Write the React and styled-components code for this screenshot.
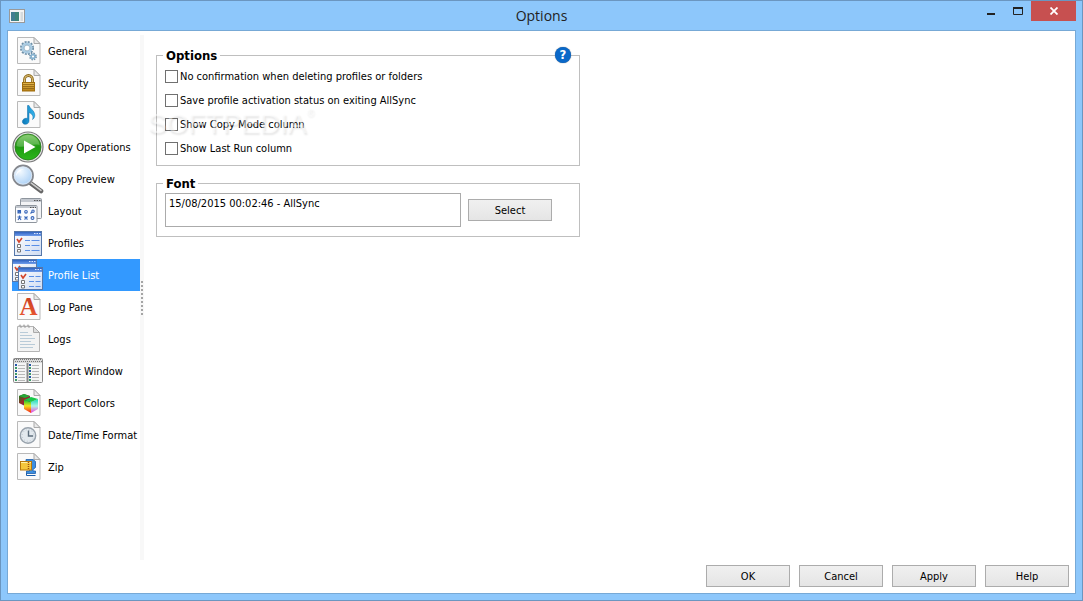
import { useState } from 'react';
import styled, { createGlobalStyle } from 'styled-components';

const GlobalStyle = createGlobalStyle`
  * {
    box-sizing: border-box;
  }
  body {
    margin: 0;
    background: #8dc7fb;
    color: #000;
    font-family: 'DejaVu Sans Condensed', 'DejaVu Sans', sans-serif;
    font-size: 11px;
    line-height: 16px;
  }
  button,
  input {
    font: inherit;
    color: inherit;
  }
`;

const Window = styled.div`
  display: flex;
  flex-direction: column;
  min-height: 100vh;
  padding: 0 6px 6px;
  border: 1px solid #6b96c0;
  background: #8dc7fb;
`;

const TitleBar = styled.header`
  display: grid;
  grid-template-columns: 1fr auto 1fr;
  align-items: center;
  height: 29px;
`;

const Title = styled.h1`
  margin: 0;
  font-family: 'Open Sans', 'Noto Sans', sans-serif;
  font-size: 14px;
  font-weight: 400;
  line-height: 28px;
  color: #222;
`;

const AppIcon = styled.svg`
  display: block;
  margin-left: 2px;
`;

const Controls = styled.div`
  display: flex;
  align-self: start;
  justify-content: flex-end;
`;

const ControlButton = styled.button`
  display: flex;
  width: ${props => (props.$close ? 45 : 27)}px;
  height: 20px;
  padding: 0;
  border: 0;
  align-items: center;
  justify-content: center;
  background: ${props => (props.$close ? '#c75050' : 'transparent')};
`;

const Client = styled.main`
  display: flex;
  flex: 1;
  flex-direction: column;
  border: 1px solid #77a9d6;
  background: #fff;
`;

const Body = styled.div`
  display: flex;
  flex: 1;
  padding: 4px 4px 0;
`;

const Sidebar = styled.nav`
  width: 128px;
  flex-shrink: 0;
`;

const Splitter = styled.div`
  display: flex;
  width: 4px;
  flex-shrink: 0;
  align-items: center;
  justify-content: center;
  background: #f8f8f8;
`;

const Grip = styled.div`
  width: 2px;
  height: 34px;
  background: repeating-linear-gradient(#a5a5a5 0 2px, transparent 2px 4px);
`;

const NavItem = styled.a`
  display: flex;
  height: 32px;
  align-items: center;
  gap: 4px;
  color: ${props => (props.$active ? '#fff' : '#000')};
  background: ${props => (props.$active ? '#3399ff' : 'transparent')};
  text-decoration: none;
  white-space: nowrap;
`;

const NavIcon = styled.svg`
  width: 32px;
  height: 32px;
  flex-shrink: 0;
`;

const Label = styled.span`
  padding-top: 2px;
`;

const Content = styled.section`
  display: flex;
  flex: 1;
  flex-direction: column;
  gap: 10px;
  padding: 13px 12px 0;
`;

const GroupWrap = styled.div`
  position: relative;
  width: 100%;
  max-width: 424px;
`;

const Group = styled.fieldset`
  min-width: 0;
  margin: 0;
  padding: ${props => props.$padding};
  border: 1px solid #bfbfbf;
`;

const Legend = styled.legend`
  margin-left: -2px;
  padding: 0 3px;
  font-size: 13px;
  font-weight: 700;
  line-height: 15px;
`;

const HelpButton = styled.button`
  position: absolute;
  top: -1px;
  right: 9px;
  width: 16px;
  height: 16px;
  padding: 0;
  border: 0;
  border-radius: 50%;
  background: #0a68c8;
  box-shadow: 0 0 1px #456;
  color: #fff;
  font-size: 13px;
  font-weight: 700;
`;

const Watermark = styled.span`
  position: absolute;
  top: 60px;
  left: -8px;
  display: flex;
  align-items: flex-start;
  font-family: 'Liberation Sans', sans-serif;
  font-size: 28px;
  line-height: 32px;
  color: rgba(255, 255, 255, 0.45);
  text-shadow: 1px 2px 2px rgba(0, 0, 0, 0.1);
  pointer-events: none;
`;

const Registered = styled.sup`
  font-size: 10px;
  line-height: 10px;
`;

const CheckRow = styled.label`
  display: flex;
  height: 24px;
  align-items: center;
  gap: 2px;
`;

const CheckBox = styled.input`
  appearance: none;
  width: 13px;
  height: 13px;
  margin: 0;
  border: 1px solid #707070;
  background: #fff;

  &:checked {
    background: #707070;
    box-shadow: inset 0 0 0 2px #fff;
  }
`;

const FontRow = styled.div`
  display: flex;
  align-items: center;
  gap: 7px;
`;

const FontPreview = styled.input`
  width: 296px;
  min-width: 0;
  height: 34px;
  padding: 0 3px 14px;
  border: 1px solid #ababab;
  background: #fff;
`;

const Button = styled.button`
  width: 84px;
  height: 22px;
  padding: 2px 0 0;
  border: 1px solid #acacac;
  background: linear-gradient(#f0f0f0, #e5e5e5);
`;

const Footer = styled.footer`
  display: flex;
  justify-content: flex-end;
  gap: 9px;
  padding: 5px 6px 6px;
`;

const Page = () => (
  <>
    <path d="M5.500 2.500h16.500l6 6v20h-22.500z" fill="#fafafa" stroke="#b9b9b9" />
    <path d="M22 2.500v6h6z" fill="#e9e9e9" stroke="#aaa" />
  </>
);

const MiniWindow = ({ x, y, w = 25, h = 23 }) => (
  <g transform={`translate(${x} ${y})`}>
    <rect x=".5" y=".5" width={w - 1} height={h - 1} fill="url(#panel)" stroke="#5577aa" />
    <rect x="1" y="1" width={w - 2} height="4" fill="url(#bar)" />
    <path d={`M${w - 8} 2.500h1.500m1 0h1.500m1 0h1.500`} stroke="#d8e6ff" />
    <path
      d={`M11 9.500h5m1.500 0h${w - 20}M11 14.500h5m1.500 0h${w - 20}M11 19.500h5m1.500 0h${w - 20}`}
      stroke="#5a8fe6"
    />
    <path d="M3.500 13.500h3v3h-3zM3.500 18.500h3v2.500h-3z" fill="#fff" stroke="#777" />
    <path d="M3 8l2 3 3-4" fill="none" stroke="#d3452c" strokeWidth="1.600" />
  </g>
);

const Defs = () => (
  <svg width="0" height="0" style={{ position: 'absolute' }} aria-hidden="true">
    <defs>
      <linearGradient id="panel" x2="1" y2="1">
        <stop stopColor="#fff" />
        <stop offset="1" stopColor="#cfdcf2" />
      </linearGradient>
      <linearGradient id="bar" x2="0" y2="1">
        <stop stopColor="#2f62c0" />
        <stop offset="1" stopColor="#6f9cec" />
      </linearGradient>
      <linearGradient id="green" x2="0" y2="1">
        <stop stopColor="#6abf4e" />
        <stop offset=".5" stopColor="#1f9a12" />
        <stop offset="1" stopColor="#2cb81c" />
      </linearGradient>
      <linearGradient id="gold" x2="0" y2="1">
        <stop stopColor="#e5b84c" />
        <stop offset="1" stopColor="#b47d12" />
      </linearGradient>
      <linearGradient id="note" x2="1" y2="0">
        <stop stopColor="#0b78b8" />
        <stop offset="1" stopColor="#35b6ee" />
      </linearGradient>
      <radialGradient id="lens" cx=".35" cy=".3" r=".8">
        <stop stopColor="#f4faff" />
        <stop offset="1" stopColor="#a3ccf5" />
      </radialGradient>
      <linearGradient id="letter" x2="0" y2="1">
        <stop stopColor="#c33a1c" />
        <stop offset="1" stopColor="#ee5a35" />
      </linearGradient>
      <linearGradient id="cubeL" x2="0" y2="1">
        <stop stopColor="#0ac832" />
        <stop offset=".45" stopColor="#f2e21c" />
        <stop offset="1" stopColor="#f81818" />
      </linearGradient>
      <linearGradient id="cubeR" x2="0" y2="1">
        <stop stopColor="#10d8b8" />
        <stop offset=".5" stopColor="#aef4e8" />
        <stop offset="1" stopColor="#f040d8" />
      </linearGradient>
      <linearGradient id="cubeB" x2="1" y2="1">
        <stop stopColor="#108018" />
        <stop offset=".5" stopColor="#a02828" />
        <stop offset="1" stopColor="#3018a0" />
      </linearGradient>
    </defs>
  </svg>
);

const icons = {
  general: (
    <>
      <Page />
      <circle cx="15" cy="13" r="6" fill="none" stroke="#6d8ea6" strokeWidth="2" strokeDasharray="2 1.140" />
      <circle cx="15" cy="13" r="4.300" fill="#fff" stroke="#a9cbe2" strokeWidth="2.400" />
      <circle cx="15" cy="13" r="2.900" fill="#fff" stroke="#7c9db5" strokeWidth=".7" />
      <circle cx="21" cy="21.500" r="3" fill="none" stroke="#6d8ea6" strokeWidth="1.800" strokeDasharray="1.400 .95" />
      <circle cx="21" cy="21.500" r="1.900" fill="#fff" stroke="#86b2d0" strokeWidth="1.600" />
    </>
  ),
  security: (
    <>
      <Page />
      <path d="M12.500 16v-3.500a4 4 0 0 1 8 0V16" fill="none" stroke="#8d6a1c" strokeWidth="2.800" />
      <path d="M12.500 16v-3.500a4 4 0 0 1 8 0V16" fill="none" stroke="#e3c57c" />
      <rect x="10.500" y="15.500" width="12" height="8.500" fill="url(#gold)" stroke="#a06d0c" />
      <path d="M11 17.500h11M11 19.500h11M11 21.500h11" stroke="#8e6212" strokeWidth=".8" />
    </>
  ),
  sounds: (
    <>
      <Page />
      <path
        d="M15.500 6.500h1.500c.5 3 5.800 5 5.800 9.500 0 2-.8 3.500-2.300 4.500 1-2.500.8-5-3.500-7v8.500c0 2.200-2 3.700-4.500 3.200-3-.7-2.700-4.700.3-5.700 1-.4 2-.3 2.700 0z"
        fill="url(#note)"
        stroke="#0a6ba8"
        strokeWidth=".5"
      />
    </>
  ),
  copy: (
    <>
      <circle cx="16" cy="16" r="15" fill="#e7e7e7" stroke="#777" strokeWidth="1.200" />
      <circle cx="16" cy="16" r="13" fill="url(#green)" stroke="#25751a" strokeWidth=".8" />
      <path d="M4.500 15C5 8.500 10 4 16 4s11 4.500 11.500 10C20 12 12 18 4.500 15z" fill="#fff" opacity=".22" />
      <path d="M12 9.500l11.500 6.500L12 22.500z" fill="#fff" />
    </>
  ),
  preview: (
    <>
      <path d="M19 20.500l10 7.500" stroke="#666" strokeWidth="4.600" strokeLinecap="round" />
      <path d="M19 19.800l10 7.500" stroke="#ccc" strokeWidth="1.600" strokeLinecap="round" />
      <circle cx="11" cy="12.500" r="10" fill="url(#lens)" stroke="#85888e" strokeWidth="1.800" />
      <circle cx="11" cy="12.500" r="8.700" fill="none" stroke="#dfe8f2" strokeWidth=".8" />
      <path d="M4 13c0-4 3-7.500 8-7-3 1-6 3-8 7z" fill="#fff" opacity=".8" />
    </>
  ),
  layout: (
    <>
      <rect x="8.500" y="3.500" width="21" height="20" rx="1" fill="#f2f3f5" stroke="#8e959d" />
      <path d="M9 5.500h20" stroke="#c3c8cf" strokeWidth="3" />
      <path d="M22 5.500h1.500m1 0h1.500m1 0h1.500" stroke="#555" />
      <rect x="3.500" y="10.500" width="21.500" height="17" rx="1" fill="#fbfcfe" stroke="#8e959d" />
      <path d="M4 12h20.500" stroke="#c3c8cf" strokeWidth="2" />
      <path d="M18 12.500h1.500m1 0h1.500m1 0h1" stroke="#555" />
      <g fill="none" stroke="#3564b8" strokeWidth="1.100">
        <path d="M6 15.500h2.500V18H6zM6 18l2.500-2.500" />
        <circle cx="14" cy="16.800" r="1.300" />
        <circle cx="21" cy="16.200" r="1.200" />
        <path d="M20 17l-1.500 1.500M5.500 22h4M7.500 20.500v3M6 25l1.500-2.500L9 25M12.500 21.500l3 3m0-3l-3 3" />
        <circle cx="20.500" cy="23" r="1.400" />
      </g>
    </>
  ),
  profiles: <MiniWindow x={2} y={4} w={28} h={25} />,
  list: (
    <>
      <MiniWindow x={0} y={0} />
      <MiniWindow x={6} y={8} />
    </>
  ),
  log: (
    <>
      <Page />
      <text
        x="16.500"
        y="24"
        textAnchor="middle"
        fontFamily="Liberation Serif, serif"
        fontSize="25"
        fontWeight="700"
        fill="url(#letter)"
      >
        A
      </text>
    </>
  ),
  logs: (
    <>
      <path d="M5.500 3.500h16l6 6v19h-22z" fill="#f3f3f3" stroke="#b4b4b4" />
      <path d="M21.500 3.500v6h6z" fill="#ddd" stroke="#aaa" />
      <path d="M7 3a1 1 0 0 1 2 0v2m2-2a1 1 0 0 1 2 0v2m2-2a1 1 0 0 1 2 0v2" fill="none" stroke="#999" strokeWidth=".9" />
      <path d="M8 9.500h8M8 12.500h12M8 15.500h15M8 18.500h11M8 21.500h15M8 24.500h13" stroke="#b9cbd8" />
    </>
  ),
  report: (
    <>
      <rect x="1.500" y="3.500" width="29" height="24" rx="1" fill="#f5f5f5" stroke="#888" />
      <rect x="2" y="4" width="28" height="4" fill="#d9d9d9" />
      <path d="M2 4.500h28M3 6.500h27" stroke="#777" strokeDasharray="1 1" />
      <path d="M15.500 8v20" stroke="#888" strokeWidth="2" />
      <path d="M3 10h2m12 0h2M3 16h2m12 0h2M3 22h2m12 0h2" stroke="#2658a8" strokeWidth="2" />
      <path d="M3 13h2m12 0h2M3 19h2m12 0h2M3 25h2m12 0h2" stroke="#3d9a68" strokeWidth="2" />
      <path
        d="M6 10.500h7m7 0h7M6 13.500h7m7 0h7M6 16.500h7m7 0h7M6 19.500h7m7 0h7M6 22.500h7m7 0h7M6 25.500h7m7 0h7"
        stroke="#b8b8b8"
      />
    </>
  ),
  colors: (
    <>
      <Page />
      <path d="M7 9l5-2 6 2v8l-5 2-6-3z" fill="url(#cubeB)" />
      <path d="M7 9l5-2 6 2-5 2z" fill="#24a838" />
      <path d="M12 13l7 2v11l-7-4z" fill="url(#cubeL)" />
      <path d="M19 15l7-3v10l-7 4z" fill="url(#cubeR)" />
      <path d="M12 13l7-3 7 2-7 3z" fill="#18c848" />
    </>
  ),
  date: (
    <>
      <Page />
      <circle cx="16" cy="16.500" r="7.700" fill="#e3e9ee" stroke="#98a2ac" strokeWidth="1.400" />
      <circle cx="16" cy="16.500" r="5.800" fill="none" stroke="#b9c4ce" strokeDasharray="1 2.040" />
      <path d="M16.500 11.500v5.500h4.500" fill="none" stroke="#5d6d7c" strokeWidth="1.400" />
    </>
  ),
  zip: (
    <>
      <Page />
      <path d="M14 8.500h7l2.500 2v6l-2.500 2v1.500h2.500v2.500h-9v-2.500h3v-3h1.500v-6H14z" fill="#3d8fe0" stroke="#1c5da8" strokeWidth=".8" />
      <rect x="8.500" y="10.500" width="11" height="8.500" fill="#f5c63c" stroke="#b8780c" />
      <path d="M9 11.500h10" stroke="#fff0a8" />
      <path d="M16.500 11v8" stroke="#9c5210" strokeWidth="1.500" strokeDasharray="1 1" />
      <path d="M14.500 22v2.500h9" fill="none" stroke="#1c5da8" />
    </>
  ),
};

const pages = [
  ['general', 'General'],
  ['security', 'Security'],
  ['sounds', 'Sounds'],
  ['copy', 'Copy Operations'],
  ['preview', 'Copy Preview'],
  ['layout', 'Layout'],
  ['profiles', 'Profiles'],
  ['list', 'Profile List'],
  ['log', 'Log Pane'],
  ['logs', 'Logs'],
  ['report', 'Report Window'],
  ['colors', 'Report Colors'],
  ['date', 'Date/Time Format'],
  ['zip', 'Zip'],
];

const options = [
  'No confirmation when deleting profiles or folders',
  'Save profile activation status on exiting AllSync',
  'Show Copy Mode column',
  'Show Last Run column',
];

const App = () => {
  const [active, setActive] = useState('list');

  return (
    <>
      <GlobalStyle />
      <Defs />
      <Window>
        <TitleBar>
          <AppIcon width="16" height="14" viewBox="0 0 16 14" aria-hidden="true">
            <rect x=".5" y=".5" width="15" height="13" fill="#f4f4f4" stroke="#999" />
            <rect x="2" y="3" width="8" height="9" fill="#3d8579" />
            <path d="M2 3h4v9H2z" fill="#4579a0" opacity=".6" />
            <path d="M11.500 3h2.500v9h-2.500z" fill="#d5dadd" />
          </AppIcon>
          <Title>Options</Title>
          <Controls>
            <ControlButton aria-label="Minimize">
              <svg width="8" height="10" viewBox="0 0 8 10">
                <path d="M0 8h8" stroke="#222" strokeWidth="2" />
              </svg>
            </ControlButton>
            <ControlButton aria-label="Maximize">
              <svg width="10" height="8" viewBox="0 0 10 8">
                <path d="M.5 1v6.500h9V1" fill="none" stroke="#222" />
                <path d="M0 1h10" stroke="#222" strokeWidth="2" />
              </svg>
            </ControlButton>
            <ControlButton $close aria-label="Close">
              <svg width="8" height="8" viewBox="0 0 8 8">
                <path d="M.5 .5l7 7M7.500 .5l-7 7" stroke="#fff" strokeWidth="1.800" />
              </svg>
            </ControlButton>
          </Controls>
        </TitleBar>
        <Client>
          <Body>
            <Sidebar aria-label="Option pages">
              {pages.map(([id, label]) => (
                <NavItem
                  key={id}
                  href={`#${id}`}
                  $active={id === active}
                  onClick={() => setActive(id)}
                >
                  <NavIcon viewBox="0 0 32 32" aria-hidden="true">
                    {icons[id]}
                  </NavIcon>
                  <Label>{label}</Label>
                </NavItem>
              ))}
            </Sidebar>
            <Splitter>
              <Grip />
            </Splitter>
            <Content>
              <GroupWrap>
                <Group $padding="1px 8px 5px">
                  <Legend>Options</Legend>
                  {options.map(option => (
                    <CheckRow key={option}>
                      <CheckBox type="checkbox" />
                      <Label>{option}</Label>
                    </CheckRow>
                  ))}
                </Group>
                <HelpButton aria-label="Help on options">?</HelpButton>
                <Watermark aria-hidden="true">
                  SOFTPEDIA<Registered>®</Registered>
                </Watermark>
              </GroupWrap>
              <GroupWrap>
                <Group $padding="2px 8px 9px">
                  <Legend>Font</Legend>
                  <FontRow>
                    <FontPreview
                      aria-label="Font preview"
                      defaultValue="15/08/2015 00:02:46 - AllSync"
                    />
                    <Button>Select</Button>
                  </FontRow>
                </Group>
              </GroupWrap>
            </Content>
          </Body>
          <Footer>
            <Button>OK</Button>
            <Button>Cancel</Button>
            <Button>Apply</Button>
            <Button>Help</Button>
          </Footer>
        </Client>
      </Window>
    </>
  );
};

export default App;
